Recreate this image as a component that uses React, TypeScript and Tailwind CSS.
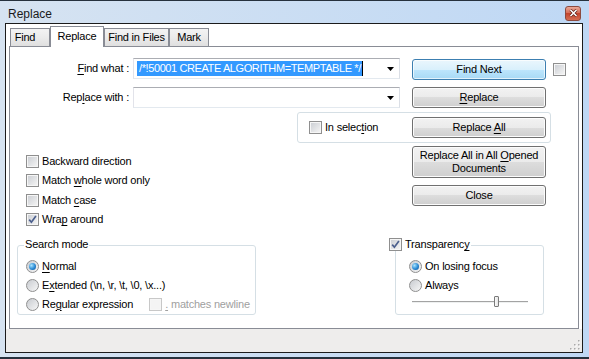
import React from 'react';

const U = ({ children }: { children: React.ReactNode }) => (
  <span className="underline underline-offset-[2px] decoration-[1px]">{children}</span>
);

function CheckBox({ checked = false, disabled = false }: { checked?: boolean; disabled?: boolean }) {
  return (
    <span
      className={`flex h-[13px] w-[13px] shrink-0 items-center justify-center border ${
        disabled ? 'border-[#c8c8c8]' : 'border-[#8f8f8f]'
      }`}
    >
      <span
        className={`flex h-[11px] w-[11px] items-center justify-center border border-[#f6f6f6] ${
          disabled ? 'bg-[#f4f4f4]' : 'bg-[linear-gradient(135deg,#cdd0d5,#f3f3f3)]'
        }`}
      >
        {checked && (
          <svg width="9" height="9" viewBox="0 0 9 9">
            <path d="M1.2 4.6 L3.4 7.2 L7.9 0.9" fill="none" stroke="#4b5f8d" strokeWidth="1.7" />
          </svg>
        )}
      </span>
    </span>
  );
}

function Radio({ checked = false }: { checked?: boolean }) {
  return (
    <span className="flex h-[13px] w-[13px] shrink-0 items-center justify-center rounded-full border border-[#8f8f8f] bg-[linear-gradient(135deg,#c8cbd0,#f7f7f7)]">
      {checked && (
        <span className="h-[7px] w-[7px] rounded-full bg-[radial-gradient(circle_at_35%_35%,#a9e4ff,#2a8ad4_55%,#0d4a8c)]" />
      )}
    </span>
  );
}

function Btn({
  children,
  className = '',
  focus = false,
}: {
  children: React.ReactNode;
  className?: string;
  focus?: boolean;
}) {
  return (
    <div
      className={`flex shrink-0 items-center justify-center rounded-[3px] border text-center leading-[13px] ${
        focus
          ? 'border-[#3c7fb1] bg-[linear-gradient(#eaf6fd,#d9f0fc_50%,#bee6fd_50%,#a7d9f5)] shadow-[inset_0_0_0_1px_#ffffffaa]'
          : 'border-[#707070] bg-[linear-gradient(#f2f2f2,#ebebeb_50%,#dddddd_50%,#cfcfcf)] shadow-[inset_0_0_0_1px_#fcfcfc]'
      } ${className}`}
    >
      <span>{children}</span>
    </div>
  );
}

function Combo({ children }: { children?: React.ReactNode }) {
  return (
    <div className="ml-[4px] flex h-[21px] w-[267px] shrink-0 items-center border border-[#abadb3] border-b-[#e3e9ef] border-l-[#e2e3ea] border-r-[#dbdfe6] bg-white pl-[3px] pr-[3px]">
      <div className="flex flex-1 items-center overflow-hidden">{children}</div>
      <svg width="7" height="4" viewBox="0 0 7 4" className="mr-[2px]">
        <path d="M0 0 H7 L3.5 4 Z" fill="#000" />
      </svg>
    </div>
  );
}

function Tab({ label, w, active = false, extra = '' }: { label: string; w: string; active?: boolean; extra?: string }) {
  return active ? (
    <div className={`relative z-10 -mb-px flex h-[21px] items-center justify-center border border-b-0 border-[#898c95] bg-white pb-[2px] ${w}`}>
      {label}
    </div>
  ) : (
    <div
      className={`flex h-[18px] items-center justify-center border border-b-0 border-[#898c95] bg-[linear-gradient(#f3f3f3,#ebebeb_50%,#dfdfdf)] ${w} ${extra}`}
    >
      {label}
    </div>
  );
}

export default function App() {
  return (
    <div className="h-[359px] w-[589px] overflow-hidden whitespace-nowrap border-t border-b-2 border-[#26313d] bg-[linear-gradient(90deg,#d6e3f1,#bfd8f5)] font-['Liberation_Sans',Arial,sans-serif] text-[11px] tracking-[-0.2px] text-black">
      {/* title bar */}
      <div className="flex h-[22px] items-center pl-[8px] pr-[8px]">
        <span className="pt-[3px] text-[12px] tracking-normal text-[#1a1a1a]">Replace</span>
        <div className="ml-auto mt-[2px] flex h-[15px] w-[16px] items-center justify-center rounded-[3px] border border-[#8c4a3f] bg-[linear-gradient(#eaa999,#d4664f_50%,#c4452d_50%,#d46d52)]">
          <svg width="9" height="8" viewBox="0 0 9 8">
            <path d="M1.5 1 L7.5 7 M7.5 1 L1.5 7" stroke="#5a1d14" strokeWidth="3" />
            <path d="M1.5 1 L7.5 7 M7.5 1 L1.5 7" stroke="#fff" strokeWidth="1.6" />
          </svg>
        </div>
      </div>

      {/* client */}
      <div className="ml-[5px] flex h-[330px] w-[578px] flex-col border border-[#1b1b1b] bg-white">
        <div className="flex h-[22px] items-end pl-[4px]">
          <Tab label="Find" w="w-[40px]" extra="pr-[10px]" />
          <Tab label="Replace" w="w-[54px]" active />
          <Tab label="Find in Files" w="w-[65px]" />
          <Tab label="Mark" w="w-[40px]" />
        </div>

        <div className="mx-[3px] flex h-[283px] flex-col border border-[#898c95] bg-white pt-[11px]">
          {/* row 1 */}
          <div className="flex h-[22px] items-start">
            <div className="flex h-[21px] w-[119px] shrink-0 items-center justify-end">
              <span>
                <U>F</U>ind what :
              </span>
            </div>
            <Combo>
              <span className="bg-[#3399ff] pl-[2px] pr-[1px] leading-[15px] tracking-[-0.4px] text-white">
                /*!50001 CREATE ALGORITHM=TEMPTABLE */
              </span>
              <span className="h-[15px] w-px bg-black" />
            </Combo>
            <Btn focus className="ml-[12px] mt-[1px] h-[21px] w-[134px]">
              Find Next
            </Btn>
            <span className="ml-[7px] mt-[5px]">
              <CheckBox />
            </span>
          </div>

          {/* row 2 */}
          <div className="mt-[7px] flex items-start">
            <div className="flex h-[21px] w-[119px] shrink-0 items-center justify-end">
              <span>
                Rep<U>l</U>ace with :
              </span>
            </div>
            <Combo />
            <Btn className="ml-[12px] h-[21px] w-[134px]">
              <U>R</U>eplace
            </Btn>
          </div>

          {/* in selection group */}
          <div className="ml-[287px] mt-[4px] flex h-[31px] w-[254px] items-center rounded-[3px] border border-[#d5dfe5] pl-[11px] pr-[4px]">
            <CheckBox />
            <span className="ml-[3px]">
              In selec<U>t</U>ion
            </span>
            <Btn className="ml-auto h-[21px] w-[134px]">
              Replace <U>A</U>ll
            </Btn>
          </div>

          {/* options + buttons */}
          <div className="flex h-[102px]">
            <div className="flex w-[402px] shrink-0 flex-col pl-[16px] pt-[8px]">
              <div className="flex h-[20px] items-center gap-[3px]">
                <CheckBox />
                <span>Backward direction</span>
              </div>
              <div className="flex h-[19px] items-center gap-[3px]">
                <CheckBox />
                <span>
                  Match <U>w</U>hole word only
                </span>
              </div>
              <div className="flex h-[20px] items-center gap-[3px]">
                <CheckBox />
                <span>
                  Match <U>c</U>ase
                </span>
              </div>
              <div className="flex h-[19px] items-center gap-[3px]">
                <CheckBox checked />
                <span>
                  Wra<U>p</U> around
                </span>
              </div>
            </div>
            <div className="flex flex-col pt-[3px]">
              <Btn className="h-[32px] w-[134px]">
                Replace All in All <U>O</U>pened
                <br />
                Documents
              </Btn>
              <Btn className="mt-[7px] h-[21px] w-[134px]">Close</Btn>
            </div>
          </div>

          {/* bottom groups */}
          <div className="flex items-start">
            <div className="relative ml-[7px] flex h-[70px] w-[239px] shrink-0 flex-col rounded-[3px] border border-[#d5dfe5] pl-[8px] pt-[10px]">
              <span className="absolute left-[6px] top-[-8px] bg-white px-[1px] leading-[13px]">Search mode</span>
              <div className="flex h-[20px] items-center gap-[3px]">
                <Radio checked />
                <span>
                  <U>N</U>ormal
                </span>
              </div>
              <div className="flex h-[19px] items-center gap-[3px]">
                <Radio />
                <span>
                  E<U>x</U>tended (\n, \r, \t, \0, \x...)
                </span>
              </div>
              <div className="flex h-[18px] items-center gap-[3px]">
                <Radio />
                <span>
                  Re<U>g</U>ular expression
                </span>
                <span className="ml-[13px] flex items-center gap-[3px] text-[#a0a0a0]">
                  <CheckBox disabled />
                  <span>
                    <U>.</U> matches newline
                  </span>
                </span>
              </div>
            </div>

            <div className="relative ml-[139px] flex h-[70px] w-[149px] shrink-0 flex-col rounded-[3px] border border-[#d5dfe5] pl-[13px] pt-[10px]">
              <span className="absolute left-[-7px] top-[-8px] flex items-center gap-[3px] bg-white pr-[2px] leading-[13px]">
                <CheckBox checked />
                <span>
                  Transparenc<U>y</U>
                </span>
              </span>
              <div className="flex h-[20px] items-center gap-[3px]">
                <Radio checked />
                <span>On losing focus</span>
              </div>
              <div className="flex h-[19px] items-center gap-[3px]">
                <Radio />
                <span>Always</span>
              </div>
              <div className="relative ml-[3px] mt-[1px] flex h-[11px] w-[116px] items-center">
                <div className="h-[2px] w-full border-t border-[#a3a3a3] border-b border-b-[#eef0f0]" />
                <div className="absolute left-[82px] top-0 h-[11px] w-[5px] rounded-[1px] border border-[#7a7a7a] bg-[linear-gradient(90deg,#fafafa,#e4e4e4)]" />
              </div>
            </div>
          </div>
        </div>

        {/* status bar */}
        <div className="flex h-[23px] items-end justify-end bg-[#eeedec] pb-[2px] pr-[2px]">
          <svg width="10" height="10" viewBox="0 0 10 10">
            {[
              [8, 0],
              [8, 4],
              [4, 4],
              [8, 8],
              [4, 8],
              [0, 8],
            ].map(([x, y], i) => (
              <g key={i}>
                <rect x={x + 1} y={y + 1} width="1.5" height="1.5" fill="#ffffff" />
                <rect x={x} y={y} width="1.5" height="1.5" fill="#a9a9a9" />
              </g>
            ))}
          </svg>
        </div>
      </div>
    </div>
  );
}
